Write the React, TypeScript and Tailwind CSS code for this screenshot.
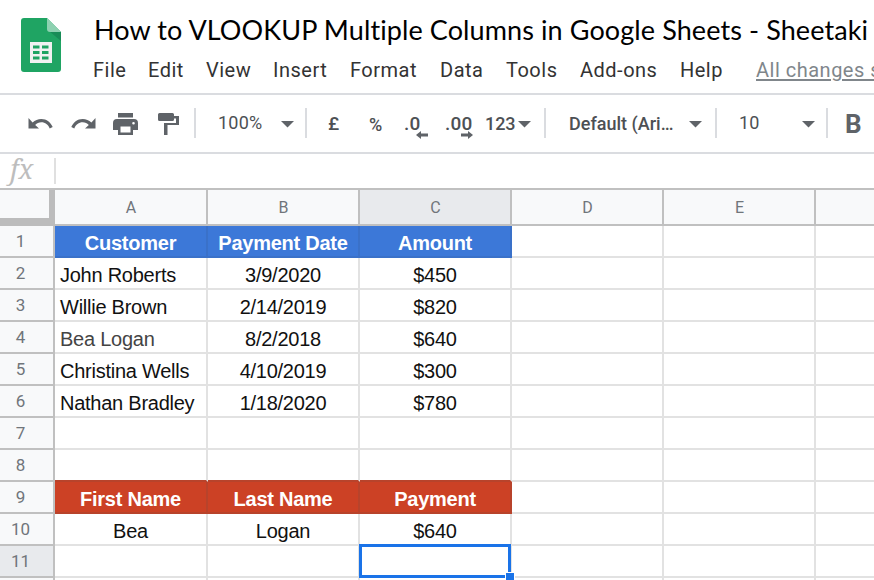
import React from 'react';

interface Row {
  cells?: string[];
  kind?: 'blue' | 'red';
}

const MENUS = [
  { label: 'File', width: 'w-[55px]' },
  { label: 'Edit', width: 'w-[58px]' },
  { label: 'View', width: 'w-[67px]' },
  { label: 'Insert', width: 'w-[77px]' },
  { label: 'Format', width: 'w-[90px]' },
  { label: 'Data', width: 'w-[66px]' },
  { label: 'Tools', width: 'w-[74px]' },
  { label: 'Add-ons', width: 'w-[100px]' },
  { label: 'Help', width: 'w-[76px]' },
];

const COLUMNS = ['A', 'B', 'C', 'D', 'E', ''];

const ROWS: Row[] = [
  { cells: ['Customer', 'Payment Date', 'Amount'], kind: 'blue' },
  { cells: ['John Roberts', '3/9/2020', '$450'] },
  { cells: ['Willie Brown', '2/14/2019', '$820'] },
  { cells: ['Bea Logan', '8/2/2018', '$640'] },
  { cells: ['Christina Wells', '4/10/2019', '$300'] },
  { cells: ['Nathan Bradley', '1/18/2020', '$780'] },
  {},
  {},
  { cells: ['First Name', 'Last Name', 'Payment'], kind: 'red' },
  { cells: ['Bea', 'Logan', '$640'] },
  {},
  {},
];

const getCellStyles = (r: number, col: number) => {
  const row = ROWS[r];
  if (row.kind && col < 3) {
    return row.kind === 'blue'
      ? 'bg-[#3c78d8] border-[#3a71c9] text-white font-bold justify-center'
      : 'bg-[#cc4125] border-[#b8432b] text-white font-bold justify-center';
  }
  // the red band covers the line above it
  if (ROWS[r + 1]?.kind === 'red' && col < 3) return 'border-r-[#e2e2e2] border-b-[#b8432b]';
  if (col === 0 && row.cells?.[0] === 'Bea Logan') return 'border-[#e2e2e2] text-[#444] justify-start pl-[5px]';
  const isName = col === 0 && row.cells && row.cells[0] !== 'Bea';
  return `border-[#e2e2e2] text-[#111] ${isName ? 'justify-start pl-[5px]' : 'justify-center'}`;
};

const Divider = () => <div className="w-0.5 h-[30px] bg-[#dadce0] shrink-0"></div>;

const Caret = () => (
  <svg className="w-[13px] h-[7px] mt-[3px] shrink-0" viewBox="0 0 13 7" fill="#5f6368"><path d="M0 0h13L6.500 6.500z" /></svg>
);

const SheetsLogo = () => (
  <svg className="w-10 h-[54px] shrink-0" viewBox="0 0 40 54">
    <path d="M3 0h23l14 14v37a3 3 0 0 1-3 3H3a3 3 0 0 1-3-3V3a3 3 0 0 1 3-3z" fill="#1fa463" />
    <path d="M28 13l12 10v-9z" fill="#188c57" />
    <path d="M26 0l14 14H29a3 3 0 0 1-3-3z" fill="#8ed1b1" />
    <path fillRule="evenodd" d="M9 24h22v21H9zM12 27.500v3h6.500v-3zM21 27.500v3h6.500v-3zM12 33v3h6.500v-3zM21 33v3h6.500v-3zM12 38.500v3h6.500v-3zM21 38.500v3h6.500v-3z" fill="#f1f1f1" />
  </svg>
);

const Toolbar = () => (
  <div className="flex items-center h-[59px] border-b-2 border-[#dadce0] text-[18px] tracking-[0.2px] text-[#4d5054] font-medium pb-px">
    <svg className="ml-7 mt-0.5 w-[25px] h-3 shrink-0" viewBox="0 0 25 12" fill="#5f6368">
      <path d="M.5 0v10.500H11L7.200 6.900C9 5.300 10.700 4.300 13.300 4.300c4 0 6.800 2.300 8.400 6.100l3-1.300C22.900 4.500 18.600 1 13.300 1c-3.300 0-6.300 1.400-8.700 3.500z" />
    </svg>
    <svg className="ml-[18px] mt-0.5 w-[25px] h-3 shrink-0" viewBox="0 0 25 12" fill="#5f6368">
      <path d="M24.500 0v10.500H14l3.800-3.600C16 5.300 14.300 4.300 11.700 4.300c-4 0-6.800 2.300-8.400 6.100L.3 9.100C2.100 4.500 6.400 1 11.700 1c3.300 0 6.300 1.400 8.700 3.500z" />
    </svg>
    <svg className="ml-[17px] mt-0.5 w-[25px] h-[22px] shrink-0" viewBox="0 0 25 22" fill="#5f6368">
      <path fillRule="evenodd" d="M5 0h15v4.500H5zM4 6h17a4 4 0 0 1 4 4v7h-5v5H5v-5H0v-7a4 4 0 0 1 4-4zM7.500 13.500v6h10v-6zM20.500 9a1.300 1.300 0 1 0 0 2.600a1.300 1.300 0 0 0 0-2.600z" />
    </svg>
    <svg className="ml-5 mt-0.5 w-[21px] h-[22px] shrink-0" viewBox="0 0 21 22" fill="#5f6368">
      <path d="M1.500 0h13A1.500 1.500 0 0 1 16 1.500V3h5v9H9.500v10H6V10h12V5.500h-2v1A1.500 1.500 0 0 1 14.500 8h-13A1.500 1.500 0 0 1 0 6.500v-5A1.500 1.500 0 0 1 1.500 0z" />
    </svg>
    <div className="ml-[15px]"><Divider /></div>
    <span className="ml-[22px] w-[63px] -mt-px font-normal">100%</span>
    <Caret />
    <div className="ml-[11px]"><Divider /></div>
    <span className="ml-[21px] mt-0.5 w-[41px] text-[19px]">£</span>
    <span className="mt-0.5 w-[35px]">%</span>
    <span className="relative mt-0.5 w-[41px] text-[19px]">
      .0
      <svg className="absolute left-3 top-[21px] w-3 h-2" viewBox="0 0 12 8" fill="#5f6368"><path d="M0 4l5-4v2.500h7v3H5V8z" /></svg>
    </span>
    <span className="relative mt-0.5 w-10 text-[19px]">
      .00
      <svg className="absolute left-4 top-[21px] w-3 h-2" viewBox="0 0 12 8" fill="#5f6368"><path d="M12 4L7 0v2.500H0v3h7V8z" /></svg>
    </span>
    <span className="mt-px w-[33px] tracking-[-0.1px]">123</span>
    <Caret />
    <div className="ml-[13px]"><Divider /></div>
    <span className="ml-[23px] mt-px w-[120px] whitespace-nowrap tracking-normal">Default (Ari…</span>
    <Caret />
    <div className="ml-[13px]"><Divider /></div>
    <span className="ml-[22px] w-[63px] -mt-px font-normal">10</span>
    <Caret />
    <div className="ml-[11px]"><Divider /></div>
    <span className="ml-[17px] mt-[3px] text-[26px] font-bold text-[#5f6368]">B</span>
  </div>
);

const App: React.FC = () => {
  return (
    <div className="w-[874px] h-[580px] overflow-hidden bg-white font-[Roboto,sans-serif]">
      <header className="flex h-[95px] border-b-2 border-[#dadce0] pl-[21px] pt-[18px]">
        <SheetsLogo />
        <div className="ml-8 -mt-[6px] shrink-0">
          <h1 className="h-9 leading-[36px] pl-px whitespace-nowrap font-[Lato,sans-serif] text-[27px] tracking-[0.1px] text-black">
            How to VLOOKUP Multiple Columns in Google Sheets - Sheetaki
          </h1>
          <nav className="flex mt-[9px] h-[26px] leading-[26px] text-[20px] tracking-[0.5px] text-[#333]">
            {MENUS.map((m) => (
              <span key={m.label} className={`${m.width} shrink-0`}>{m.label}</span>
            ))}
            <span className="whitespace-nowrap text-[#80868b] underline decoration-2 underline-offset-2">All changes saved</span>
          </nav>
        </div>
      </header>

      <Toolbar />

      {/* Formula bar */}
      <div className="flex items-center h-9 border-b-2 border-[#c0c0c0]">
        <div className="w-[54px] h-9 pl-[10px] leading-[31px] font-['Noto_Serif','DejaVu_Serif','Liberation_Serif',serif] italic text-[27px] text-[#bdbdbd]">fx</div>
        <div className="w-0.5 h-[26px] bg-[#e0e0e0]"></div>
      </div>

      {/* Column headers */}
      <div className="flex h-9 w-[968px]">
        <div className="w-[55px] shrink-0 bg-[#f8f9fa] border-r-[6px] border-b-8 border-[#bcbcbc]"></div>
        {COLUMNS.map((c, i) => (
          <div
            key={i}
            className={`${i === 0 ? 'w-[153px]' : 'w-[152px]'} shrink-0 flex items-center justify-center pt-0.5 pl-px border-r-2 border-b-2 border-[#c0c0c0] text-[16px] text-[#70757a] ${
              i === 2 ? 'bg-[#e8eaed]' : 'bg-[#f8f9fa]'
            }`}
          >
            {c}
          </div>
        ))}
      </div>

      <div className="relative">
        {ROWS.map((row, r) => (
          <div key={r} className="flex h-8 w-[968px]">
            <div
              className={`w-[55px] shrink-0 flex items-center justify-center pr-3 pt-0.5 border-r-2 border-b-2 border-[#c0c0c0] text-[17px] text-[#70757a] ${
                r === 10 ? 'bg-[#e8eaed]' : 'bg-[#f8f9fa]'
              }`}
            >
              {r < 11 && r + 1}
            </div>
            {COLUMNS.map((_, c) => (
              <div
                key={c}
                className={`${c === 0 ? 'w-[153px]' : 'w-[152px]'} shrink-0 flex items-center pt-[3px] border-r-2 border-b-2 whitespace-nowrap font-['Liberation_Sans',Arial,sans-serif] text-[20px] tracking-[-0.25px] ${getCellStyles(r, c)}`}
              >
                {row.cells?.[c]}
              </div>
            ))}
          </div>
        ))}

        {/* Active cell */}
        <div className="absolute left-[359px] top-[318px] w-[152px] h-[34px] border-3 border-[#1a73e8]">
          <div className="absolute -right-[7px] -bottom-[7px] w-[10px] h-[10px] bg-[#1a73e8] border border-white"></div>
        </div>
      </div>
    </div>
  );
};

export default App;
